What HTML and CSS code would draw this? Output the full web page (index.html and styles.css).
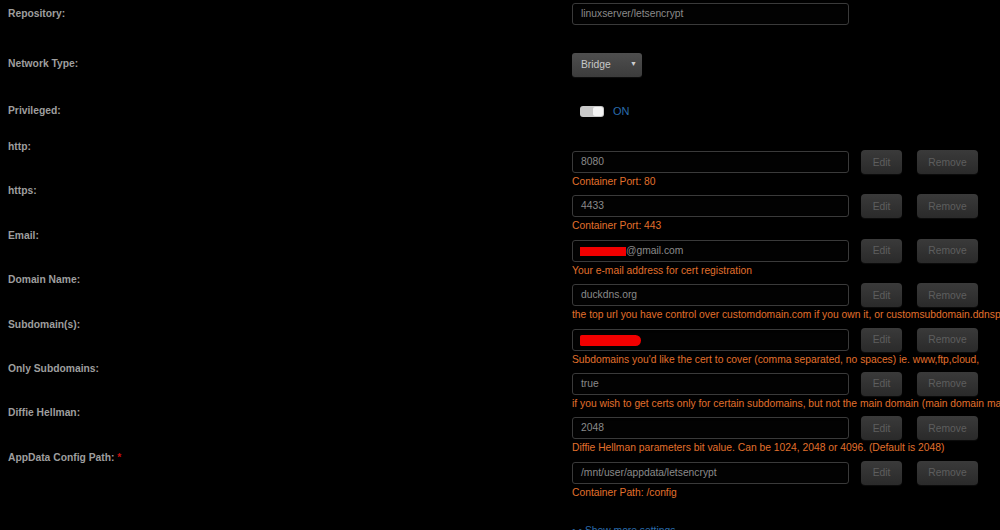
FILE: index.html
```html
<!DOCTYPE html>
<html lang="en">
<head>
<meta charset="utf-8">
<title>Edit Container</title>
<link rel="stylesheet" href="styles.css">
</head>
<body>
<form class="settings">
  <div class="row row-repo">
    <div class="label">Repository:</div>
    <div class="value"><div class="field">linuxserver/letsencrypt</div></div>
  </div>

  <div class="row row-network">
    <div class="label">Network Type:</div>
    <div class="value"><div class="select">Bridge<span class="caret">&#9660;</span></div></div>
  </div>

  <div class="row row-priv">
    <div class="label">Privileged:</div>
    <div class="value switch-wrap">
      <span class="switch"><span class="knob"></span></span>
      <span class="switch-text">ON</span>
    </div>
  </div>

  <div class="row config">
    <div class="label">http:</div>
    <div class="value">
      <div class="line"><div class="field">8080</div><button type="button" class="btn edit">Edit</button><button type="button" class="btn remove">Remove</button></div>
      <div class="desc">Container Port: 80</div>
    </div>
  </div>

  <div class="row config">
    <div class="label">https:</div>
    <div class="value">
      <div class="line"><div class="field">4433</div><button type="button" class="btn edit">Edit</button><button type="button" class="btn remove">Remove</button></div>
      <div class="desc">Container Port: 443</div>
    </div>
  </div>

  <div class="row config">
    <div class="label">Email:</div>
    <div class="value">
      <div class="line"><div class="field"><span class="redact redact-mail"></span>@gmail.com</div><button type="button" class="btn edit">Edit</button><button type="button" class="btn remove">Remove</button></div>
      <div class="desc">Your e-mail address for cert registration</div>
    </div>
  </div>

  <div class="row config">
    <div class="label">Domain Name:</div>
    <div class="value">
      <div class="line"><div class="field">duckdns.org</div><button type="button" class="btn edit">Edit</button><button type="button" class="btn remove">Remove</button></div>
      <div class="desc">the top url you have control over customdomain.com if you own it, or customsubdomain.ddnsprovider.com if dynamic dns</div>
    </div>
  </div>

  <div class="row config">
    <div class="label">Subdomain(s):</div>
    <div class="value">
      <div class="line"><div class="field"><span class="redact redact-sub"></span></div><button type="button" class="btn edit">Edit</button><button type="button" class="btn remove">Remove</button></div>
      <div class="desc">Subdomains you'd like the cert to cover (comma separated, no spaces) ie. www,ftp,cloud,</div>
    </div>
  </div>

  <div class="row config">
    <div class="label">Only Subdomains:</div>
    <div class="value">
      <div class="line"><div class="field">true</div><button type="button" class="btn edit">Edit</button><button type="button" class="btn remove">Remove</button></div>
      <div class="desc">if you wish to get certs only for certain subdomains, but not the main domain (main domain may be hosted on another machine)</div>
    </div>
  </div>

  <div class="row config">
    <div class="label">Diffie Hellman:</div>
    <div class="value">
      <div class="line"><div class="field">2048</div><button type="button" class="btn edit">Edit</button><button type="button" class="btn remove">Remove</button></div>
      <div class="desc">Diffie Hellman parameters bit value. Can be 1024, 2048 or 4096. (Default is 2048)</div>
    </div>
  </div>

  <div class="row config">
    <div class="label">AppData Config Path: <span class="req">*</span></div>
    <div class="value">
      <div class="line"><div class="field">/mnt/user/appdata/letsencrypt</div><button type="button" class="btn edit">Edit</button><button type="button" class="btn remove">Remove</button></div>
      <div class="desc">Container Path: /config</div>
    </div>
  </div>

  <div class="row more">
    <div class="label"></div>
    <div class="value"><a class="more-link" href="#">&#8226; &#8226; Show more settings ...</a></div>
  </div>
</form>
</body>
</html>
```

FILE: styles.css
```css
html, body {
  margin: 0;
  padding: 0;
  background: #000;
  overflow: hidden;
}

body {
  font-family: "Liberation Sans", Arial, sans-serif;
  font-size: 10.3px;
  color: #9c9c9c;
}

.settings {
  padding-left: 8px;
}

.row {
  display: grid;
  grid-template-columns: 564px 1fr;
  align-items: start;
}

.label {
  font-weight: bold;
  line-height: 14px;
  color: #9e9e9e;
  white-space: nowrap;
}

.req {
  color: #c80d0d;
}

/* top rows */
.row-repo {
  height: 50px;
}
.row-repo .label {
  padding-top: 7px;
}
.row-repo .value {
  padding-top: 3px;
}

.row-network {
  height: 47px;
}
.row-network .label {
  padding-top: 7px;
}
.row-network .value {
  padding-top: 3px;
}

.row-priv {
  height: 51px;
}
.row-priv .label {
  padding-top: 7px;
}

/* text fields */
.field {
  box-sizing: border-box;
  width: 277px;
  height: 22px;
  padding: 0 8px;
  border: 1px solid #3a3a3a;
  border-radius: 3px;
  background: #020202;
  box-shadow: inset 0 1px 2px rgba(0, 0, 0, 0.8);
  color: #8a8a8a;
  line-height: 20px;
  white-space: nowrap;
  overflow: hidden;
  display: flex;
  align-items: center;
}

.redact {
  display: inline-block;
  background: #f20000;
}
.redact-mail {
  width: 46px;
  height: 9px;
  margin-left: -1px;
  margin-top: 1px;
}
.redact-sub {
  width: 61px;
  height: 11px;
  margin-left: -1px;
  margin-top: 2px;
  border-radius: 2px 6px 6px 2px;
}

/* dropdown */
.select {
  box-sizing: border-box;
  width: 70px;
  height: 24px;
  padding: 0 0 0 9px;
  border-radius: 3px;
  background: linear-gradient(#4e4e4e, #3c3c3c);
  box-shadow: 0 1px 1px rgba(255, 255, 255, 0.06);
  color: #c8c8c8;
  line-height: 24px;
  position: relative;
}
.caret {
  position: absolute;
  right: 5px;
  top: -1px;
  font-size: 7px;
  color: #cfcfcf;
}

/* switch */
.switch-wrap {
  display: flex;
  align-items: center;
  gap: 9px;
  padding-top: 8px;
  padding-left: 8px;
}
.switch {
  box-sizing: border-box;
  width: 24px;
  height: 11px;
  border-radius: 3px;
  background: #c9c9c9;
  display: flex;
  justify-content: flex-end;
  padding: 1px;
}
.knob {
  width: 10px;
  height: 9px;
  border-radius: 2px;
  background: #f4f4f4;
}
.switch-text {
  color: #2a6bab;
  font-size: 11px;
  line-height: 12px;
}

/* configurable entries */
.config .label {
  margin-top: -8px;
}
.config .value {
  padding-top: 2px;
  height: 42.4px;
}
.line {
  display: flex;
  align-items: center;
}
.btn {
  box-sizing: border-box;
  height: 24px;
  border: 0;
  border-radius: 4px;
  background: linear-gradient(#3a3a3a, #2a2a2a);
  box-shadow: 0 1px 1px rgba(255, 255, 255, 0.05);
  color: #5e5e5e;
  font-family: inherit;
  font-size: 10.3px;
  padding: 0;
}
.edit {
  width: 41px;
  margin-left: 12px;
}
.remove {
  width: 61px;
  margin-left: 15px;
}
.desc {
  margin-top: 1px;
  line-height: 14px;
  color: #e2702c;
  white-space: nowrap;
}

/* footer link */
.more .value {
  padding-top: 21px;
}
.more-link {
  color: #2a6bab;
  text-decoration: none;
  line-height: 14px;
}
```
